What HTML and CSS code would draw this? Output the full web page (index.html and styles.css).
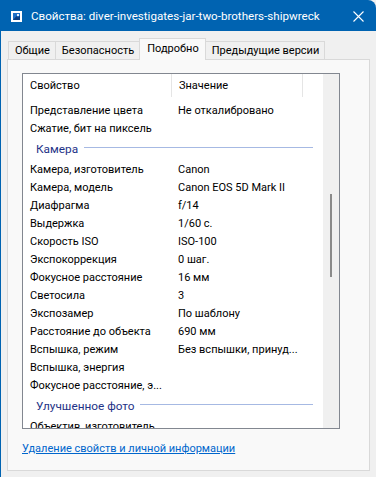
FILE: index.html
```html
<!DOCTYPE html>
<html lang="ru">
<head>
<meta charset="utf-8">
<link rel="stylesheet" href="styles.css">
</head>
<body>
<div class="window">
  <div class="titlebar">
    <svg class="app-icon" width="11" height="11" viewBox="0 0 11 11">
      <rect x="0" y="0" width="11" height="11" fill="#ffffff"/>
      <rect x="2" y="2" width="7" height="7" fill="#1f6fc5"/>
      <path d="M2 9 L5.5 5 L7 6.5 L9 4.5 L9 9 Z" fill="#0b3d80"/>
      <rect x="6" y="3" width="2" height="2" fill="#e3f0ff"/>
    </svg>
    <span class="title">Свойства: diver-investigates-jar-two-brothers-shipwreck</span>
    <svg class="close" width="11" height="11" viewBox="0 0 11 11">
      <path d="M0.5 0.5 L10.5 10.5 M10.5 0.5 L0.5 10.5" stroke="#ffffff" stroke-width="1.1"/>
    </svg>
  </div>
  <div class="tabs">
    <div class="tab">Общие</div>
    <div class="tab">Безопасность</div>
    <div class="tab active">Подробно</div>
    <div class="tab">Предыдущие версии</div>
  </div>
  <div class="panel">
    <div class="listview">
      <div class="list-main">
        <div class="header">
          <div class="hcell c1">Свойство</div>
          <div class="hcell c2">Значение</div>
          <div class="hcell c3"></div>
        </div>
        <div class="rows">
          <div class="row"><span class="c1">Представление цвета</span><span class="c2">Не откалибровано</span></div>
          <div class="row"><span class="c1">Сжатие, бит на пиксель</span><span class="c2"></span></div>
          <div class="group"><span class="gname">Камера</span><span class="gline"></span></div>
          <div class="row"><span class="c1">Камера, изготовитель</span><span class="c2">Canon</span></div>
          <div class="row"><span class="c1">Камера, модель</span><span class="c2">Canon EOS 5D Mark II</span></div>
          <div class="row"><span class="c1">Диафрагма</span><span class="c2">f/14</span></div>
          <div class="row"><span class="c1">Выдержка</span><span class="c2">1/60 с.</span></div>
          <div class="row"><span class="c1">Скорость ISO</span><span class="c2">ISO-100</span></div>
          <div class="row"><span class="c1">Экспокоррекция</span><span class="c2">0 шаг.</span></div>
          <div class="row"><span class="c1">Фокусное расстояние</span><span class="c2">16 мм</span></div>
          <div class="row"><span class="c1">Светосила</span><span class="c2">3</span></div>
          <div class="row"><span class="c1">Экспозамер</span><span class="c2">По шаблону</span></div>
          <div class="row"><span class="c1">Расстояние до объекта</span><span class="c2">690 мм</span></div>
          <div class="row"><span class="c1">Вспышка, режим</span><span class="c2">Без вспышки, принуд...</span></div>
          <div class="row"><span class="c1">Вспышка, энергия</span><span class="c2"></span></div>
          <div class="row"><span class="c1">Фокусное расстояние, э...</span><span class="c2"></span></div>
          <div class="group"><span class="gname">Улучшенное фото</span><span class="gline"></span></div>
          <div class="row"><span class="c1">Объектив, изготовитель</span><span class="c2"></span></div>
        </div>
      </div>
      <div class="scrollbar"><div class="thumb"></div></div>
    </div>
    <a class="link" href="#">Удаление свойств и личной информации</a>
  </div>
</div>
</body>
</html>
```

FILE: styles.css
```css
* { box-sizing: border-box; }
html, body {
  margin: 0;
  padding: 0;
  width: 376px;
  height: 477px;
  overflow: hidden;
  background: #ffffff;
}
body {
  font-family: Roboto, "Noto Sans", sans-serif;
  font-size: 11px;
  color: #000;
}
.window {
  width: 376px;
  height: 477px;
  background: #f0f0f0;
  border-left: 1px solid #0063b1;
  display: flex;
  flex-direction: column;
}
.titlebar {
  height: 31px;
  flex: none;
  background: #0063b1;
  border-top-right-radius: 8px;
  margin-left: -1px;
  display: flex;
  align-items: center;
  padding-left: 11px;
  color: #fff;
}
.app-icon { flex: none; margin-top: 1px; }
.title {
  margin-left: 9px;
  font-size: 11.6px;
  white-space: nowrap;
  flex: 1;
}
.close { flex: none; margin-right: 12px; margin-top: 1px; }

.tabs {
  display: flex;
  align-items: flex-end;
  padding-left: 7px;
  margin-top: 7px;
  height: 21px;
  flex: none;
  position: relative;
  z-index: 1;
}
.tab {
  height: 18px;
  padding: 0 5px 0 6px;
  border: 1px solid #d9d9d9;
  border-bottom: none;
  margin-right: -1px;
  background: #f0f0f0;
  display: flex;
  align-items: center;
  line-height: 1;
}
.tab.active {
  background: #f9f9f9;
  padding: 0 6px 3px 7px;
  margin-bottom: -1px;
  height: 22px;
}
.panel {
  margin: 0 6px 0 6px;
  height: 412px;
  border: 1px solid #d9d9d9;
  background: #f9f9f9;
  display: flex;
  flex-direction: column;
  padding: 13px 0 0 14px;
}
.listview {
  width: 318px;
  height: 356px;
  border: 1px solid #828790;
  background: #fff;
  display: flex;
  flex: none;
}
.list-main {
  flex: 1;
  overflow: hidden;
  display: flex;
  flex-direction: column;
}
.header {
  height: 24px;
  flex: none;
  display: flex;
  align-items: stretch;
}
.hcell {
  display: flex;
  align-items: center;
  padding-left: 7px;
  border-right: 1px solid #e5e5e5;
  margin: 0 0 1px;
}
.hcell.c1 { width: 149px; }
.hcell.c2 { width: 131px; }
.hcell.c3 { border-right: none; flex: 1; }
.rows {
  padding-top: 3px;
}
.row {
  height: 18px;
  display: flex;
  align-items: center;
  white-space: nowrap;
}
.row .c1 { width: 148px; padding-left: 7px; overflow: hidden; }
.row .c2 { padding-left: 7px; }
.group {
  height: 23px;
  display: flex;
  align-items: center;
  padding-left: 13px;
  padding-right: 10px;
  color: #1e3287;
}
.gname { font-size: 11.8px; white-space: nowrap; }
.gline {
  flex: 1;
  height: 1px;
  background: #a6b9e3;
  margin-left: 6px;
  margin-top: -2px;
}
.scrollbar {
  width: 16px;
  flex: none;
  background: #f0f0f0;
  position: relative;
}
.thumb {
  position: absolute;
  left: 7px;
  top: 120px;
  width: 2px;
  height: 83px;
  background: #8a8a8a;
}
.link {
  margin-top: 13px;
  color: #0066cc;
  text-decoration: underline;
  align-self: flex-start;
}
```
